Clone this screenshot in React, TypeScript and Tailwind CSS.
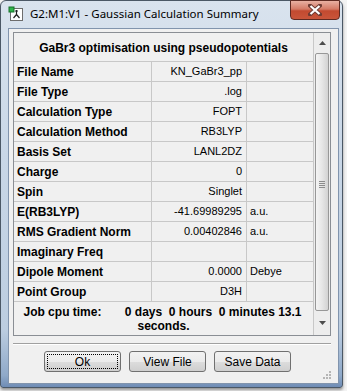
import React from "react";

const rows: { label: string; value: string; unit?: string }[] = [
  { label: "File Name", value: "KN_GaBr3_pp" },
  { label: "File Type", value: ".log" },
  { label: "Calculation Type", value: "FOPT" },
  { label: "Calculation Method", value: "RB3LYP" },
  { label: "Basis Set", value: "LANL2DZ" },
  { label: "Charge", value: "0" },
  { label: "Spin", value: "Singlet" },
  { label: "E(RB3LYP)", value: "-41.69989295", unit: "a.u." },
  { label: "RMS Gradient Norm", value: "0.00402846", unit: "a.u." },
  { label: "Imaginary Freq", value: "" },
  { label: "Dipole Moment", value: "0.0000", unit: "Debye" },
  { label: "Point Group", value: "D3H" },
];

function AppIcon() {
  return (
    <svg width="16" height="16" viewBox="0 0 16 16">
      <rect x="2.5" y="2.5" width="12" height="12" fill="#fff" stroke="#6d6d6d" />
      <rect x="1" y="1" width="5" height="5" fill="#2fb34a" stroke="#16702a" />
      <path d="M8.5 5 V8.5 M8.5 8.5 L5.5 12 M8.5 8.5 L11.5 12" stroke="#222" strokeWidth="1.2" fill="none" />
      <rect x="7.5" y="4" width="2" height="2" fill="#222" />
    </svg>
  );
}

function WinButton({ label, focused }: { label: string; focused?: boolean }) {
  return (
    <button className="relative w-[77px] h-[21px] rounded-[3px] border border-[#707070] bg-[linear-gradient(to_bottom,#f2f2f2_0%,#ebebeb_50%,#dddddd_51%,#cfcfcf_100%)] text-[12px] text-black">
      {focused && (
        <span className="absolute inset-[2px] border border-dotted border-black" />
      )}
      <span className="relative">{label}</span>
    </button>
  );
}

function ScrollBar() {
  return (
    <div className="w-[17px] border-l border-[#c8c8c8] bg-[#ededed] flex flex-col items-center">
      <div className="h-[19px] w-full flex items-center justify-center">
        <svg width="7" height="4" viewBox="0 0 7 4">
          <path d="M0 4 L3.5 0 L7 4 Z" fill="#4d4d4d" />
        </svg>
      </div>
      <div className="mt-[1px] w-[14px] h-[258px] rounded-[2px] border border-[#979797] bg-[linear-gradient(to_right,#f4f4f4,#e6e6e6_50%,#d2d2d2)] flex items-center justify-center">
        <div className="flex flex-col gap-[1px] mt-[4px]">
          <div className="w-[6px] h-[1px] bg-[#8c8c8c]" />
          <div className="w-[6px] h-[1px] bg-[#8c8c8c]" />
          <div className="w-[6px] h-[1px] bg-[#8c8c8c]" />
          <div className="w-[6px] h-[1px] bg-[#8c8c8c]" />
        </div>
      </div>
      <div className="flex-1 w-full flex items-center justify-center">
        <svg width="7" height="4" viewBox="0 0 7 4">
          <path d="M0 0 L7 0 L3.5 4 Z" fill="#4d4d4d" />
        </svg>
      </div>
    </div>
  );
}

export default function App() {
  return (
    <div
      className="w-[347px] h-[391px] bg-[#f3f3f3] overflow-hidden"
      style={{ fontFamily: '"Liberation Sans", Arial, sans-serif' }}
    >
      {/* window frame */}
      <div className="relative w-[343px] h-[388px] rounded-t-[6px] rounded-b-[3px] border border-[#4b5866] bg-[linear-gradient(to_bottom,#d9e3ee_0%,#c9d7e7_40%,#bccde0_85%,#8fa9c9_97%,#6f8cb5_100%)] flex flex-col px-[7px] shadow-[0_2px_3px_rgba(0,0,0,0.4)]">
        {/* title bar */}
        <div className="h-[27px] flex items-center gap-[6px] pb-[1px]">
          <AppIcon />
          <span
            className="text-[11.5px] text-black"
            style={{ fontFamily: '"Noto Sans", "Liberation Sans", sans-serif' }}
          >
            G2:M1:V1 - Gaussian Calculation Summary
          </span>
        </div>

        {/* close button */}
        <div className="absolute top-[-1px] right-[2px] w-[50px] h-[20px] rounded-b-[4px] border border-[#5e2a22] bg-[linear-gradient(to_bottom,#e8b0a2_0%,#d47a66_45%,#c24a30_55%,#c9553a_100%)] flex items-center justify-center">
          <svg width="14" height="12" viewBox="0 0 14 12">
            <path d="M2 1.5 L12 10.5 M12 1.5 L2 10.5" stroke="#6e3b33" strokeWidth="4" strokeLinecap="square" />
            <path d="M2.5 2 L11.5 10 M11.5 2 L2.5 10" stroke="#ffffff" strokeWidth="2.2" />
          </svg>
        </div>

        {/* client area */}
        <div className="relative w-[331px] h-[356px] border border-[#8194ad] bg-[#f0f0f0] flex flex-col pl-[4px] pt-[3px]">
          <div className="w-[318px] h-[304px] border border-[#8a8e94] flex bg-[#f0f0f0]">
            {/* table */}
            <div className="flex-1 flex flex-col">
              <div className="h-[29px] border-b border-[#c8c8c8] flex items-center justify-center font-bold text-[12px] text-black pt-[1px]">
                GaBr3 optimisation using pseudopotentials
              </div>
              {rows.map((r) => (
                <div key={r.label} className="h-[20px] border-b border-[#c8c8c8] flex text-[12px] text-black">
                  <div className="w-[138px] border-r border-[#c8c8c8] font-bold pl-[3px] flex items-center">
                    {r.label}
                  </div>
                  <div className="w-[95px] border-r border-[#c8c8c8] flex items-center justify-end pr-[4px] text-[11px]">
                    {r.value}
                  </div>
                  <div className="flex-1 flex items-center pl-[3px] text-[11px]">{r.unit}</div>
                </div>
              ))}
              <div className="flex-1 flex flex-col items-center justify-center font-bold text-[12px] text-black leading-[14px]">
                <div className="whitespace-pre pr-[2px]">
                  {"Job cpu time:       0 days  0 hours  0 minutes 13.1"}
                </div>
                <div>seconds.</div>
              </div>
            </div>
            <ScrollBar />
          </div>

          {/* separator */}
          <div className="mt-[7px] w-[318px] border-t border-[#a0a0a0] border-b border-b-white" />

          {/* buttons */}
          <div className="mt-[6px] pl-[31px] flex gap-[8px]">
            <WinButton label="Ok" focused />
            <WinButton label="View File" />
            <WinButton label="Save Data" />
          </div>

          {/* size grip */}
          <div className="absolute right-[7px] bottom-[4px] grid grid-cols-3 gap-[1px]">
            <span />
            <span />
            <span className="w-[2px] h-[2px] bg-[#b5b5b5]" />
            <span />
            <span className="w-[2px] h-[2px] bg-[#b5b5b5]" />
            <span className="w-[2px] h-[2px] bg-[#b5b5b5]" />
            <span className="w-[2px] h-[2px] bg-[#b5b5b5]" />
            <span className="w-[2px] h-[2px] bg-[#b5b5b5]" />
            <span className="w-[2px] h-[2px] bg-[#b5b5b5]" />
          </div>
        </div>
      </div>
    </div>
  );
}
